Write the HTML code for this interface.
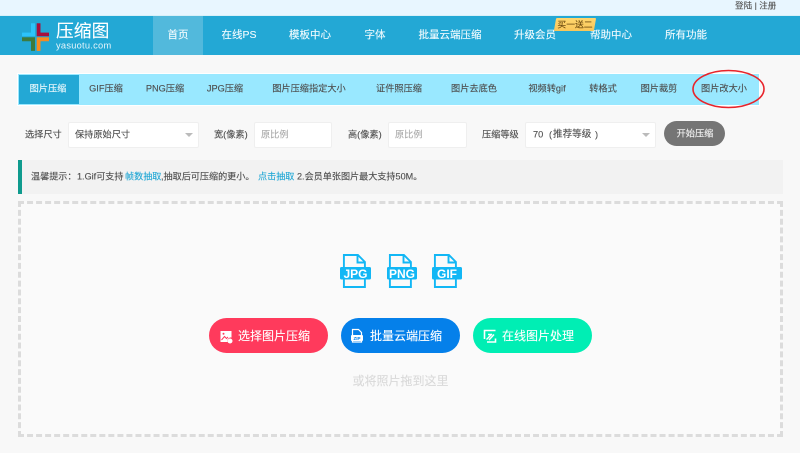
<!DOCTYPE html>
<html lang="zh"><head><meta charset="utf-8"><title>压缩图</title>
<style>
html,body{margin:0;padding:0}
body{width:800px;height:453px;overflow:hidden;background:#f8f8f8;position:relative;font-family:"Liberation Sans","Noto Sans CJK SC",sans-serif;-webkit-text-stroke:.12px}
#w{position:absolute;left:0;top:0;width:800px;height:453px;filter:blur(.3px)}
.a{position:absolute}
.t{position:absolute;white-space:nowrap;transform:translate(-50%,-50%);line-height:1}
.l{position:absolute;white-space:nowrap;transform:translateY(-50%);line-height:1}
.n{color:#f2fbfe;font-size:10.5px;top:35px}
.tb{color:#4d4d4d;font-size:9.2px;top:89px}
.f{color:#4d4d4d;font-size:9.2px;top:135px}
.b{background:#fff;border:1px solid #efefef;border-radius:2px;box-sizing:border-box;top:122px;height:26px}
.p{color:#aaa}
.m{color:#4d4d4d;font-size:9.1px;top:177px}
.btn{top:318px;height:35px;border-radius:18px}
.bt{color:#fff;font-size:12px;top:336px}
</style></head><body><div id="w">
<div class="a" style="left:0;top:0;width:800px;height:15px;background:#e8f6ff"></div>
<div class="l" style="left:735px;top:6px;font-size:8.6px;color:#555">登陆 | 注册</div>
<div class="a" style="left:0;top:15px;width:800px;height:1px;background:#d8f0f8"></div>
<div class="a" style="left:0;top:16px;width:800px;height:39px;background:#23a8d5"></div>
<div class="a" style="left:153px;top:16px;width:50px;height:39px;background:#52b9dc"></div>
<svg class="a" style="left:20px;top:21px" width="32" height="32" viewBox="0 0 32 32">
<g stroke-width=".6" stroke-linejoin="round">
<path d="M11.300 2.600h3.400v12.400H2.300v-3.100h9z" fill="#2cc3fa" stroke="#2cc3fa"/>
<path d="M17 2.600h3.200v9.300h8.500v3.100H17z" fill="#a80f3c" stroke="#a80f3c"/>
<path d="M2.300 16.600h12.400v13h-3.400v-9.700h-9z" fill="#3e7a3c" stroke="#3e7a3c"/>
<path d="M17 16.600h11.700v3.300h-8.500v9.700H17z" fill="#f98a1e" stroke="#f98a1e"/>
</g></svg>
<div class="l" style="left:56px;top:32px;font-size:17.800px;color:#fff">压缩图</div>
<div class="l" style="left:56px;top:46px;font-size:9.300px;color:#e5f5fb;letter-spacing:.25px;-webkit-text-stroke:0">yasuotu.com</div>
<div class="t n" style="left:178px">首页</div>
<div class="t n" style="left:239px">在线PS</div>
<div class="t n" style="left:310px">模板中心</div>
<div class="t n" style="left:375px">字体</div>
<div class="t n" style="left:450px">批量云端压缩</div>
<div class="t n" style="left:535px">升级会员</div>
<div class="t n" style="left:611px">帮助中心</div>
<div class="t n" style="left:686px">所有功能</div>
<div class="a" style="left:555px;top:18px;width:40px;height:13px;background:linear-gradient(#ffd76e,#f8c65a);transform:skewX(-10deg);border-radius:1px"></div>
<div class="t" style="left:575px;top:25px;font-size:8.800px;color:#6b4a10">买一送二</div>

<div class="a" style="left:18px;top:74px;width:741px;height:31px;background:#99e8ff;box-shadow:0 0 0 1px #fff"></div>
<div class="a" style="left:18.500px;top:75px;width:60px;height:29px;background:#23a8d5"></div>
<div class="t tb" style="left:48px;color:#eaf8fc">图片压缩</div>
<div class="t tb" style="left:106px">GIF压缩</div>
<div class="t tb" style="left:165px">PNG压缩</div>
<div class="t tb" style="left:225px">JPG压缩</div>
<div class="t tb" style="left:309px">图片压缩指定大小</div>
<div class="t tb" style="left:399px">证件照压缩</div>
<div class="t tb" style="left:474px">图片去底色</div>
<div class="t tb" style="left:547px">视频转gif</div>
<div class="t tb" style="left:603px">转格式</div>
<div class="t tb" style="left:659px">图片裁剪</div>
<div class="t tb" style="left:724px">图片改大小</div>
<svg class="a" style="left:690px;top:68px" width="78" height="42"><ellipse cx="38.500" cy="21" rx="35.500" ry="18.500" fill="none" stroke="#e8242b" stroke-width="1.600"/></svg>

<div class="l f" style="left:25px">选择尺寸</div>
<div class="a b" style="left:68px;width:131px"></div>
<div class="l f" style="left:75px">保持原始尺寸</div>
<div class="a" style="left:185px;top:133px;border:4px solid transparent;border-top:4px solid #bbb"></div>
<div class="l f" style="left:214px">宽(像素)</div>
<div class="a b" style="left:254px;width:78px"></div>
<div class="l f p" style="left:261px">原比例</div>
<div class="l f" style="left:348px">高(像素)</div>
<div class="a b" style="left:388px;width:79px"></div>
<div class="l f p" style="left:395px">原比例</div>
<div class="l f" style="left:482px">压缩等级</div>
<div class="a b" style="left:525px;width:131px"></div>
<div class="l f" style="left:533px">70</div>
<div class="l f" style="left:549px">(</div>
<div class="l f" style="left:553px;font-size:9.600px">推荐等级</div>
<div class="l f" style="left:595px">)</div>
<div class="a" style="left:642px;top:133px;border:4px solid transparent;border-top:4px solid #bbb"></div>
<div class="a" style="left:664px;top:121px;width:61px;height:25px;background:#757575;border-radius:13px"></div>
<div class="t" style="left:695px;top:134px;font-size:9.200px;color:#f2f2f2">开始压缩</div>

<div class="a" style="left:18px;top:160px;width:765px;height:34px;background:#f2f2f2"></div>
<div class="a" style="left:18px;top:160px;width:4px;height:34px;background:#0f9b8e"></div>
<div class="l m" style="left:31px">温馨提示：</div>
<div class="l m" style="left:77px">1.Gif可支持</div>
<div class="l m" style="left:125px;color:#23a8d5">帧数抽取</div>
<div class="l m" style="left:161px">,抽取后可压缩的更小。</div>
<div class="l m" style="left:258px;color:#23a8d5">点击抽取</div>
<div class="l m" style="left:297px">2.会员单张图片最大支持50M。</div>

<div class="a" style="left:18px;top:201px;width:765px;height:236px;box-sizing:border-box;border:3px dashed #dcdcdc;background:#fafafa"></div>

<svg class="a" style="left:338px;top:252px" width="126" height="38" viewBox="0 0 126 38">
<g fill="none" stroke="#12b7f5" stroke-width="1.900">
<path d="M5.900 15V3h14l7 7v5M5.900 27v8h21v-8M19.500 3v7.500h7.500"/>
<path d="M51.900 15V3h14l7 7v5M51.900 27v8h21v-8M65.500 3v7.500h7.500"/>
<path d="M96.900 15V3h14l7 7v5M96.900 27v8h21v-8M110.500 3v7.500h7.500"/>
</g>
<g fill="#12b7f5"><rect x="2" y="15" width="31" height="12.500" rx="1.500"/><rect x="49" y="15" width="30" height="12.500" rx="1.500"/><rect x="94" y="15" width="30" height="12.500" rx="1.500"/></g>
<g fill="#fff" font-family="Liberation Sans" font-size="12" font-weight="700" text-anchor="middle" style="-webkit-text-stroke:0"><text x="17.500" y="25.800">JPG</text><text x="64" y="25.800">PNG</text><text x="109" y="25.800">GIF</text></g>
</svg>

<div class="a btn" style="left:209px;width:119px;background:#ff3a5c"></div>
<div class="a btn" style="left:341px;width:119px;background:#0580ea"></div>
<div class="a btn" style="left:473px;width:119px;background:#00eeb4"></div>
<svg class="a" style="left:219px;top:330px" width="14" height="14" viewBox="0 0 14 14">
<path d="M1.500 1h11v6.500a3.500 3.500 0 0 0-4 4.500H1.500z" fill="#fff"/><path d="M2.500 10l3-3.500 2 2 1.500-1.500" fill="none" stroke="#ff3a5c" stroke-width="1"/><circle cx="4.500" cy="3.800" r="1" fill="#ff3a5c"/><circle cx="11" cy="11" r="2.500" fill="#fff"/>
</svg>
<svg class="a" style="left:350px;top:328px" width="14" height="15" viewBox="0 0 14 15">
<path d="M2.500 7V1.500h6l3 3V7M2.500 12.500v1.500h9v-1.500" fill="none" stroke="#fff" stroke-width="1.200"/><rect x="1" y="7" width="12" height="6" rx="1" fill="#fff"/><text x="7" y="12" font-family="Liberation Sans" font-size="4.500" font-weight="700" fill="#0580ea" text-anchor="middle" style="-webkit-text-stroke:0">ZIP</text>
</svg>
<svg class="a" style="left:483px;top:329px" width="14" height="14" viewBox="0 0 14 14">
<path d="M12.500 9.500v3.500H4M1.500 10V1.500h11" fill="none" stroke="#fff" stroke-width="1.600"/><path d="M3.500 10.500L9 5M6 11l5-5.500M5 5.500h4" fill="none" stroke="#fff" stroke-width="1.400"/>
</svg>
<div class="l bt" style="left:238px">选择图片压缩</div>
<div class="l bt" style="left:370px">批量云端压缩</div>
<div class="l bt" style="left:502px">在线图片处理</div>
<div class="t" style="left:400.500px;top:381px;font-size:12px;color:#d9d9d9">或将照片拖到这里</div>
</div></body></html>
